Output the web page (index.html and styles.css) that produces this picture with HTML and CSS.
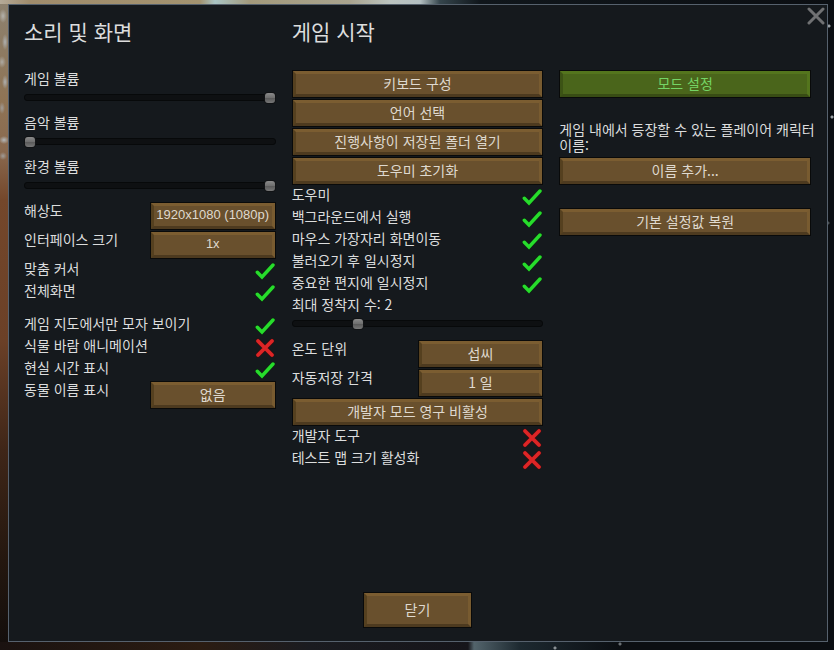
FILE: index.html
```
<!DOCTYPE html>
<html lang="ko">
<head>
    <meta charset="UTF-8">
    <meta name="viewport" content="width=device-width, initial-scale=1.0">
    <title>설정</title>
    <link rel="stylesheet" href="styles.css">
</head>
<body>
    <!-- 체크 / 엑스 아이콘 -->
    <svg class="symbols" aria-hidden="true">
        <symbol id="check" viewBox="0 0 20 20">
            <path d="M2.3 11.2 L7 16 L18 4" fill="none" stroke="#0b2a0e" stroke-width="4.4" stroke-linecap="round"/>
            <path d="M2.3 11.2 L7 16 L18 4" fill="none" stroke="#27dc2c" stroke-width="3.4" stroke-linecap="round"/>
        </symbol>
        <symbol id="cross" viewBox="0 0 20 20">
            <path d="M3 3 L17 17 M17 3 L3 17" fill="none" stroke="#3a0f10" stroke-width="4.6" stroke-linecap="round"/>
            <path d="M3 3 L17 17 M17 3 L3 17" fill="none" stroke="#dd2526" stroke-width="3.8" stroke-linecap="round"/>
        </symbol>
    </svg>

    <main class="window">
        <button class="closeX" aria-label="닫기">
            <svg viewBox="0 0 18 18"><path d="M2 2 L16 16 M16 2 L2 16" fill="none" stroke="#707173" stroke-width="3" stroke-linecap="round"/></svg>
        </button>

        <div class="columns">
            <!-- 소리 및 화면 -->
            <section class="column">
                <h2>소리 및 화면</h2>
                <label class="slider">게임 볼륨<input type="range" min="0" max="100" value="100"></label>
                <label class="slider">음악 볼륨<input type="range" min="0" max="100" value="0"></label>
                <label class="slider">환경 볼륨<input type="range" min="0" max="100" value="100"></label>
                <label class="choice">해상도<select class="btn latin"><option>1920x1080 (1080p)</option></select></label>
                <label class="choice">인터페이스 크기<select class="btn latin"><option>1x</option></select></label>
                <label class="toggle">맞춤 커서<span class="mark"><input type="checkbox" checked><svg class="on"><use href="#check"/></svg><svg class="off"><use href="#cross"/></svg></span></label>
                <label class="toggle">전체화면<span class="mark"><input type="checkbox" checked><svg class="on"><use href="#check"/></svg><svg class="off"><use href="#cross"/></svg></span></label>
                <div class="display">
                    <label class="toggle">게임 지도에서만 모자 보이기<span class="mark"><input type="checkbox" checked><svg class="on"><use href="#check"/></svg><svg class="off"><use href="#cross"/></svg></span></label>
                    <label class="toggle">식물 바람 애니메이션<span class="mark"><input type="checkbox"><svg class="on"><use href="#check"/></svg><svg class="off"><use href="#cross"/></svg></span></label>
                    <label class="toggle">현실 시간 표시<span class="mark"><input type="checkbox" checked><svg class="on"><use href="#check"/></svg><svg class="off"><use href="#cross"/></svg></span></label>
                    <label class="choice">동물 이름 표시<select class="btn"><option>없음</option></select></label>
                </div>
            </section>

            <!-- 게임 시작 -->
            <section class="column">
                <h2>게임 시작</h2>
                <button class="btn">키보드 구성</button>
                <button class="btn">언어 선택</button>
                <button class="btn">진행사항이 저장된 폴더 열기</button>
                <button class="btn">도우미 초기화</button>
                <label class="toggle">도우미<span class="mark"><input type="checkbox" checked><svg class="on"><use href="#check"/></svg><svg class="off"><use href="#cross"/></svg></span></label>
                <label class="toggle">백그라운드에서 실행<span class="mark"><input type="checkbox" checked><svg class="on"><use href="#check"/></svg><svg class="off"><use href="#cross"/></svg></span></label>
                <label class="toggle">마우스 가장자리 화면이동<span class="mark"><input type="checkbox" checked><svg class="on"><use href="#check"/></svg><svg class="off"><use href="#cross"/></svg></span></label>
                <label class="toggle">불러오기 후 일시정지<span class="mark"><input type="checkbox" checked><svg class="on"><use href="#check"/></svg><svg class="off"><use href="#cross"/></svg></span></label>
                <label class="toggle">중요한 편지에 일시정지<span class="mark"><input type="checkbox" checked><svg class="on"><use href="#check"/></svg><svg class="off"><use href="#cross"/></svg></span></label>
                <label class="slider">최대 정착지 수: 2<input type="range" min="1" max="5" value="2"></label>
                <label class="choice">온도 단위<select class="btn"><option>섭씨</option></select></label>
                <label class="choice">자동저장 간격<select class="btn"><option>1 일</option></select></label>
                <button class="btn">개발자 모드 영구 비활성</button>
                <label class="toggle">개발자 도구<span class="mark"><input type="checkbox"><svg class="on"><use href="#check"/></svg><svg class="off"><use href="#cross"/></svg></span></label>
                <label class="toggle">테스트 맵 크기 활성화<span class="mark"><input type="checkbox"><svg class="on"><use href="#check"/></svg><svg class="off"><use href="#cross"/></svg></span></label>
            </section>

            <!-- 모드, 이름 -->
            <section class="column extra">
                <button class="btn green">모드 설정</button>
                <p>게임 내에서 등장할 수 있는 플레이어 캐릭터<br>이름:</p>
                <button class="btn">이름 추가...</button>
                <button class="btn restore">기본 설정값 복원</button>
            </section>
        </div>

        <button class="btn close">닫기</button>
    </main>
</body>
</html>
```

FILE: styles.css
```
* {
    box-sizing: border-box;
}

body {
    margin: 0;
    min-height: 100vh;
    padding: 4px 6px 8px 8px;
    display: flex;
    font-family: "Noto Sans CJK KR", "Noto Sans", sans-serif;
    font-size: 14px;
    line-height: 16px;
    color: #dcdddd;
    /* 행성과 우주 배경 */
    background-color: #0b0e12;
    background-image:
        radial-gradient(circle at 829px 26px, #9aa0a4 0 1px, transparent 2px),
        radial-gradient(circle at 832px 117px, #9aa0a4 0 1px, transparent 2px),
        radial-gradient(circle at 828px 223px, #4a5054 0 1px, transparent 2px),
        radial-gradient(circle at 555px 648px, #8a9094 0 1px, transparent 2px),
        radial-gradient(circle at 620px 644px, #6a7074 0 1px, transparent 2px),
        radial-gradient(4px 7px at 3px 16px, #b4b2ac, transparent),
        radial-gradient(3px 8px at 5px 42px, #aeb0b0, transparent),
        radial-gradient(4px 6px at 2px 62px, #aeaaa2, transparent),
        radial-gradient(3px 7px at 5px 82px, #aeb0b0, transparent),
        radial-gradient(3px 6px at 2px 108px, #a09c98, transparent),
        radial-gradient(5px 4px at 4px 140px, #b4b8ba, transparent),
        radial-gradient(4px 4px at 3px 156px, #a09c98, transparent),
        linear-gradient(90deg, #b5aa98, #a08c6c 30px, #a39370 200px, #a9c4c4 215px, #a39a7c 250px, #a9a48f 350px, #bcc4c0 390px, #b4c0c2 420px, #35454c 440px, #10161b 480px, #0b0e12),
        linear-gradient(90deg, #1a1210, #2b1c12 200px, #1a1b20 310px, #16151a 468px, #53646c 474px, #1d2930 520px, #0b0e12 620px),
        linear-gradient(#8d8270, #8f7455 100px, #8a6a50 150px, #74472b 200px, #6b4027 340px, #3f2618 450px, #24170f 560px, #120d0b);
    background-repeat: no-repeat;
    background-size: auto, auto, auto, auto, auto, auto, auto, auto, auto, auto, auto, auto, 100% 4px, 100% 8px, 8px 100%;
    background-position: 0 0, 0 0, 0 0, 0 0, 0 0, 0 0, 0 0, 0 0, 0 0, 0 0, 0 0, 0 0, 0 0, 0 100%, 0 0;
}

.symbols {
    display: none;
}

.window {
    position: relative;
    flex: 1;
    display: flex;
    flex-direction: column;
    padding: 13px 16px 13px 15px;
    background: #15191d;
    border: 1px solid #56616d;
}

.closeX {
    position: absolute;
    top: 2px;
    right: 2px;
    width: 18px;
    height: 18px;
    padding: 0;
    border: 0;
    background: none;
}

.closeX svg {
    display: block;
}

.columns {
    display: grid;
    grid-template-columns: repeat(3, minmax(0, 1fr));
    gap: 16px;
}

.column {
    display: flex;
    flex-direction: column;
}

h2 {
    margin: 0 0 26px;
    font-size: 21px;
    font-weight: 400;
    line-height: 26px;
}

/* 버튼 */
.btn {
    height: 26px;
    margin: 1px 1px 2px;
    padding: 0 0 2px;
    font-family: inherit;
    font-size: 14px;
    line-height: 18px;
    text-align: center;
    text-align-last: center;
    color: #dfd9cf;
    background: #69502d;
    border: 3px solid;
    border-color: #7b5d31 #785b30 #4d3a1f #55401f;
    border-radius: 0;
    box-shadow: 0 0 0 1px #090a0a;
    appearance: none;
}

.latin {
    font-family: "Liberation Sans", sans-serif;
    font-size: 13px;
}

.green {
    color: #74d465;
    background: #4a651b;
    border-color: #54751d #54751d #384c14 #3c5315;
}

/* 설정 줄 */
.toggle {
    display: flex;
    justify-content: space-between;
    height: 22px;
}

.choice {
    display: flex;
    justify-content: space-between;
    height: 29px;
}

.choice .btn {
    width: calc(50% - 2px);
}

.display {
    margin-top: 11px;
}

.mark {
    position: relative;
    width: 20px;
    height: 20px;
    margin: 1px 1px 0 0;
}

.mark input {
    position: absolute;
    inset: 0;
    margin: 0;
    appearance: none;
}

.mark svg {
    display: block;
    width: 20px;
    height: 20px;
}

.mark input:checked ~ .off,
.mark input:not(:checked) ~ .on {
    display: none;
}

/* 슬라이더 */
.slider {
    display: flex;
    flex-direction: column;
    height: 44px;
}

.slider input {
    width: 100%;
    height: 20px;
    margin: 1px 0 0;
    background: none;
    appearance: none;
}

.slider input::-webkit-slider-runnable-track {
    height: 7px;
    background: #0e1012;
    border: 1px solid #07090a;
    border-radius: 3px;
}

.slider input::-webkit-slider-thumb {
    width: 10px;
    height: 10px;
    margin-top: -2px;
    appearance: none;
    background: linear-gradient(#8a8a8a, #6d6d6d 50%, #595959 51%, #777777);
    border-radius: 3px;
    box-shadow: 0 0 0 1px #111315;
}

.extra {
    padding-top: 52px;
}

.extra p {
    margin: 22px 0 4px;
    line-height: 16px;
    white-space: nowrap;
}

.restore {
    margin-top: 23px;
}

.close {
    width: 107px;
    height: 34px;
    margin: auto auto 1px;
}
```
